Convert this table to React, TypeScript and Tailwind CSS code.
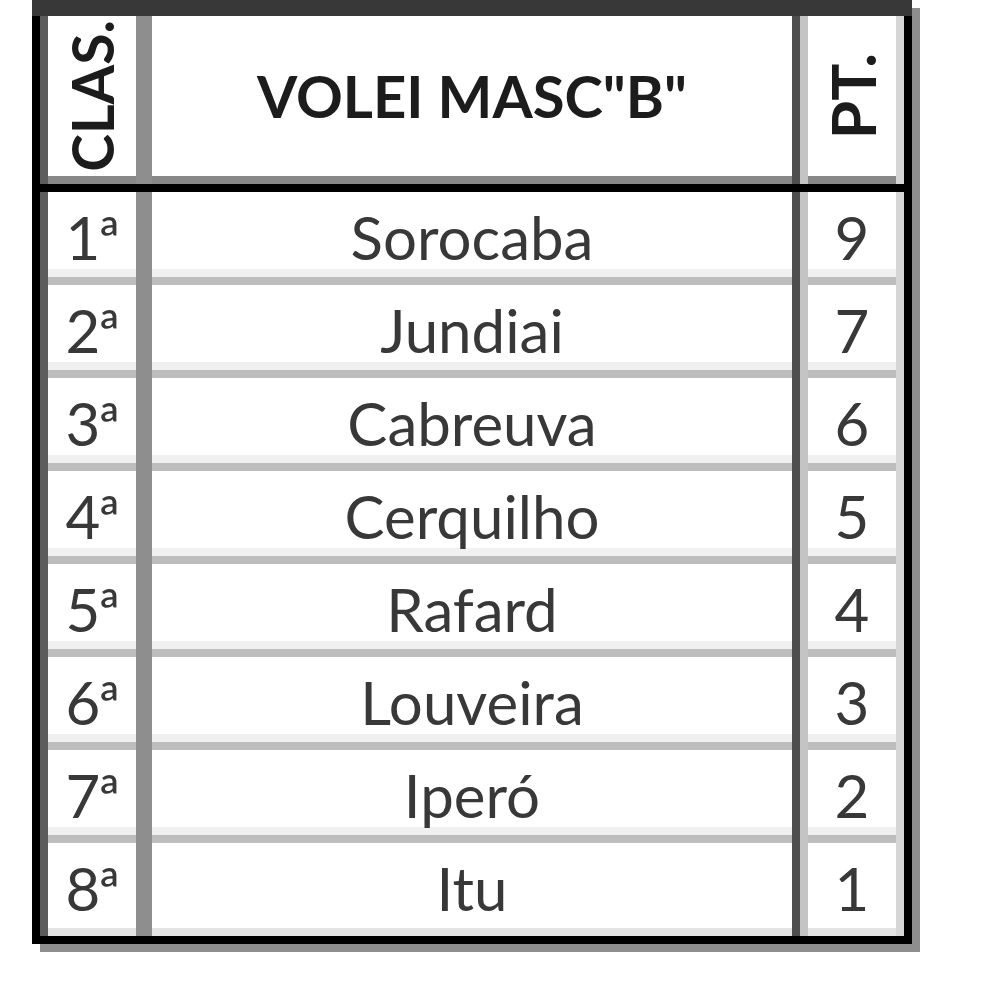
const rows = [
  { pos: "1ª", team: "Sorocaba", pts: "9" },
  { pos: "2ª", team: "Jundiai", pts: "7" },
  { pos: "3ª", team: "Cabreuva", pts: "6" },
  { pos: "4ª", team: "Cerquilho", pts: "5" },
  { pos: "5ª", team: "Rafard", pts: "4" },
  { pos: "6ª", team: "Louveira", pts: "3" },
  { pos: "7ª", team: "Iperó", pts: "2" },
  { pos: "8ª", team: "Itu", pts: "1" },
];

function Row({ pos, team, pts, last }: { pos: string; team: string; pts: string; last: boolean }) {
  const cell = last
    ? "flex items-center justify-center border-b-8 border-[#e4e4e4]"
    : "flex items-center justify-center border-b-8 border-[#bdbdbd] shadow-[inset_0_-8px_0_#f0f0f0]";
  return (
    <div className="flex h-[93px]">
      <div className="w-2 bg-[#5c5c5c]" />
      <div className={`w-[88px] pt-1 text-[60px] ${cell}`}>
        <span className="tracking-[-2px]">{pos}</span>
      </div>
      <div className="w-4 bg-[#8e8e8e]" />
      <div className={`w-[640px] pt-1 text-[60px] ${cell}`}>{team}</div>
      <div className="w-2 bg-[#4e4e4e]" />
      <div className="w-2 bg-[#c4c4c4]" />
      <div className={`w-[88px] pt-1 text-[60px] ${cell}`}>{pts}</div>
      <div className="w-2 bg-[#d6d6d6]" />
    </div>
  );
}

export default function App() {
  return (
    <div className="h-[1000px] w-[1000px] bg-white pl-8 font-['Lato',sans-serif] text-[#383838]">
      <div className="w-[880px] leading-none shadow-[8px_8px_0_#8e8e8e]">
        <div className="h-4 bg-[#383838]" />
        <div className="border-x-8 border-b-8 border-black">
          <div className="flex h-[168px]">
            <div className="w-2 bg-[#5c5c5c]" />
            <div className="flex w-[88px] items-center justify-center border-b-8 border-[#888] font-bold text-[#1c1c1c]">
              <span className="rotate-180 text-[57px] [writing-mode:vertical-rl]">CLAS.</span>
            </div>
            <div className="w-4 bg-[#8e8e8e]" />
            <div className="flex w-[640px] items-center justify-center border-b-8 border-[#888] text-[58px] font-bold text-[#1c1c1c]">
              VOLEI MASC"B"
            </div>
            <div className="w-2 bg-[#4e4e4e]" />
            <div className="w-2 bg-[#c4c4c4]" />
            <div className="flex w-[88px] items-center justify-center border-b-8 border-[#888] font-bold text-[#1c1c1c]">
              <span className="rotate-180 text-[62px] [writing-mode:vertical-rl]">PT.</span>
            </div>
            <div className="w-2 bg-[#d6d6d6]" />
          </div>
          <div className="h-2 bg-black" />
          {rows.map((r, i) => (
            <Row key={r.pos} {...r} last={i === rows.length - 1} />
          ))}
        </div>
      </div>
    </div>
  );
}
